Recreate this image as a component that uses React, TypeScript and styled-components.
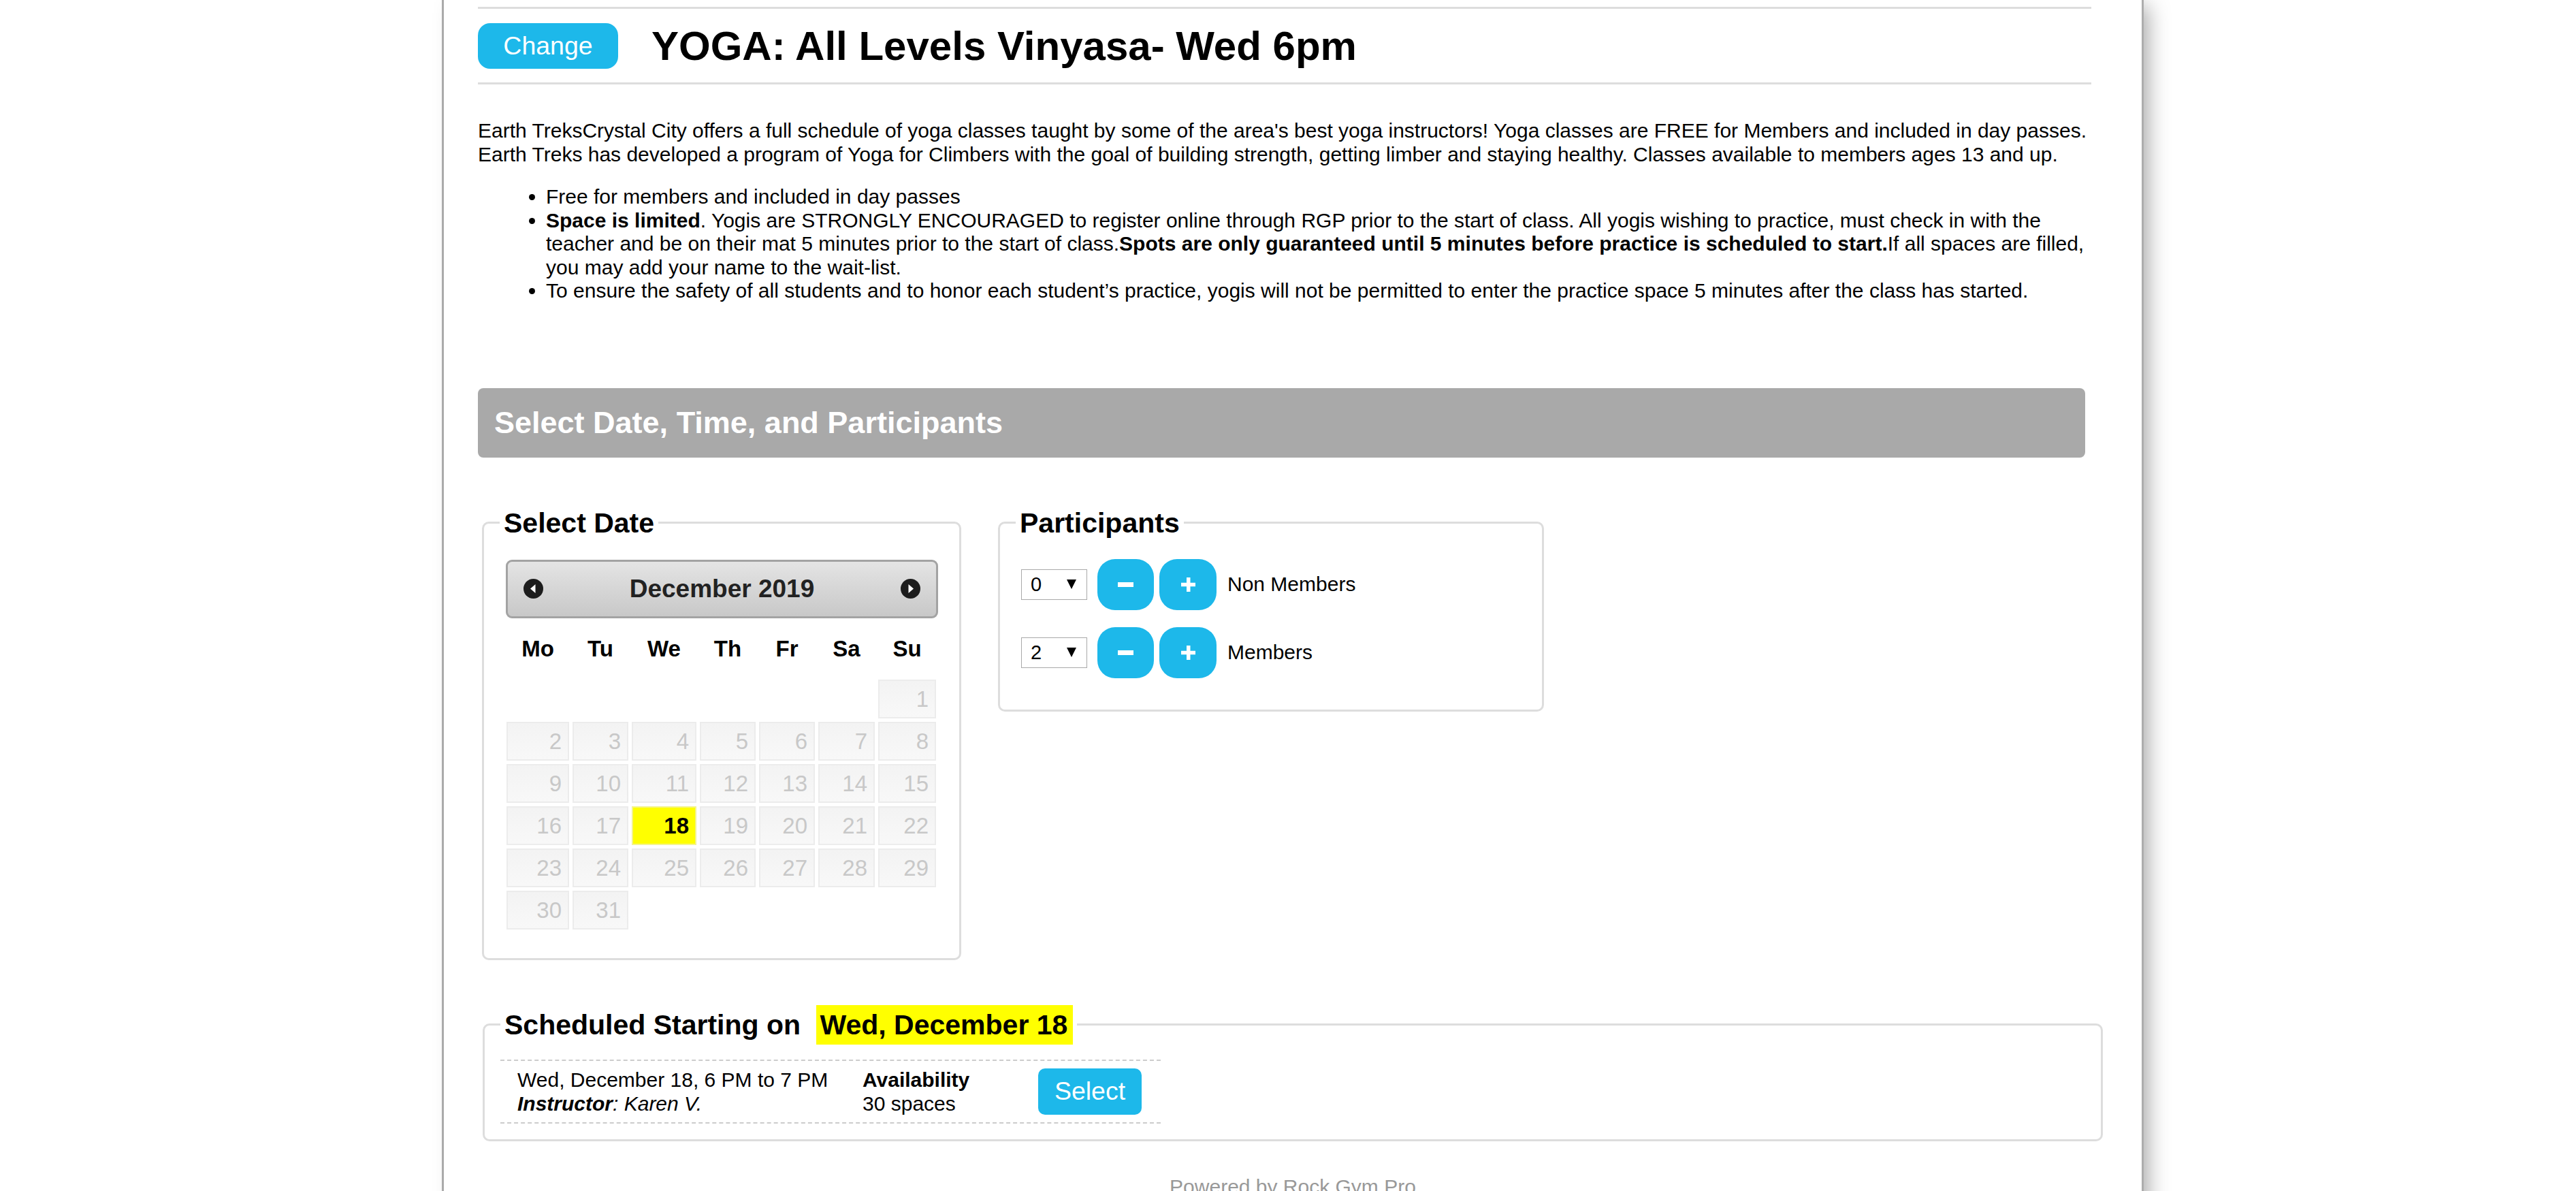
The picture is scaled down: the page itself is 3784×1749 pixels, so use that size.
import React from 'react';
import styled, { createGlobalStyle } from 'styled-components';

const GlobalStyle = createGlobalStyle`
  html, body { margin: 0; padding: 0; background: #fff; }
  body {
    font-family: "Liberation Sans", Arial, Helvetica, sans-serif;
    color: #000;
    font-size: 30px;
  }
  * { box-sizing: border-box; }
`;

const Page = styled.div`
  padding-left: 14px;
  height: 1749px;
  overflow: hidden;
`;

const Container = styled.div`
  width: 2500px;
  margin: 0 auto;
  min-height: 1800px;
  background: #fff;
  border-left: 3px solid #aaa;
  border-right: 3px solid #adadad;
  box-shadow: 14px 0 30px -8px rgba(0, 0, 0, 0.35);
  padding: 10px 57px 0 50px;
`;

const Rule = styled.div`
  height: 3px;
  background: #ddd;
  margin-right: 17px;
`;

const HeadingRow = styled.div`
  display: flex;
  align-items: center;
  gap: 49px;
  padding: 21px 0 20px;
`;

const PillButton = styled.button<{ $w: number; $h: number; $r: number }>`
  width: ${(p) => p.$w}px;
  height: ${(p) => p.$h}px;
  border-radius: ${(p) => p.$r}px;
  border: none;
  background: #1db8ea;
  color: #fff;
  font-family: "Liberation Sans", Arial, sans-serif;
  font-size: 37.5px;
  padding: 0;
  display: flex;
  align-items: center;
  justify-content: center;
  flex-shrink: 0;
`;

const Title = styled.h1`
  margin: 0;
  font-size: 60px;
  font-weight: bold;
  line-height: 1;
`;

const Description = styled.p`
  margin: 51px 17px 0 0;
  line-height: 34.5px;
`;

const Bullets = styled.ul`
  margin: 28px 17px 0 0;
  padding-left: 100px;
  line-height: 34.5px;
`;

const SectionBar = styled.div`
  margin: 125px 26px 0 0;
  height: 102px;
  background: #a9a9a9;
  border-radius: 8px;
  color: #fff;
  font-size: 45px;
  font-weight: bold;
  padding-left: 24px;
  display: flex;
  align-items: center;
`;

const FieldsetRow = styled.div`
  display: flex;
  align-items: flex-start;
  gap: 54px;
  margin: 73px 0 0 6px;
`;

const Fieldset = styled.fieldset<{ $w?: number }>`
  margin: 0;
  border: 3px solid #ddd;
  border-radius: 10px;
  min-width: 0;
  ${(p) => (p.$w ? `width: ${p.$w}px;` : '')}
`;

const DateFieldset = styled(Fieldset)`
  padding: 22px 22px 33px 23px;
`;

const ParticipantsFieldset = styled(Fieldset)`
  padding: 30px 23px 46px 23px;
`;

const ScheduleFieldset = styled(Fieldset)`
  margin: 72px 0 0 7px;
  padding: 28px 23px 23px 23px;
`;

const Legend = styled.legend`
  font-size: 41px;
  font-weight: bold;
  line-height: 46px;
  padding: 0 6px;
`;

const Highlight = styled.span`
  background: #ffff00;
  margin-left: 12px;
  padding: 6px 8px 6px 5px;
`;

/* Calendar */
const Calendar = styled.div`
  width: 653px;
  padding: 9px;
`;

const CalHeader = styled.div`
  height: 86px;
  border: 3px solid #a3a3a3;
  border-radius: 9px;
  background: linear-gradient(#e4e4e4, #c8c8c8);
  display: flex;
  align-items: center;
  justify-content: space-between;
  padding: 0 22px;
`;

const CalTitle = styled.div`
  font-size: 37px;
  font-weight: bold;
  color: #222;
`;

const COLS = '92px 82px 95px 82px 82px 83px 85px';

const WeekRow = styled.div`
  display: grid;
  grid-template-columns: ${COLS};
  column-gap: 5px;
  margin: 15px 0 0 1px;
  height: 60px;
  align-items: center;
`;

const WeekDay = styled.div`
  text-align: center;
  font-size: 33px;
  font-weight: bold;
`;

const DayGrid = styled.div`
  display: grid;
  grid-template-columns: ${COLS};
  grid-auto-rows: 57px;
  column-gap: 5px;
  row-gap: 5px;
  margin: 15px 0 0 1px;
`;

const DayCell = styled.div<{ $active?: boolean; $empty?: boolean }>`
  border: 2px solid ${(p) => (p.$empty ? 'transparent' : p.$active ? '#f4f48c' : '#ececec')};
  background: ${(p) =>
    p.$empty ? 'transparent' : p.$active ? '#ffff00' : 'linear-gradient(#f3f3f3, #f8f8f8)'};
  color: ${(p) => (p.$active ? '#000' : '#c8c8c8')};
  font-weight: ${(p) => (p.$active ? 'bold' : 'normal')};
  font-size: 33px;
  text-align: right;
  padding-right: 9px;
  line-height: 53px;
`;

/* Participants */
const PartRow = styled.div`
  display: flex;
  align-items: center;
  & + & {
    margin-top: 25px;
  }
`;

const SelectBox = styled.div`
  width: 97px;
  height: 45px;
  margin: 0 15px 0 8px;
  border: 1px solid #a9a9a9;
  display: flex;
  align-items: center;
  justify-content: space-between;
  padding: 0 15px 0 13px;
  font-size: 29px;
`;

const Caret = styled.span`
  width: 0;
  height: 0;
  border-left: 7.5px solid transparent;
  border-right: 7.5px solid transparent;
  border-top: 14px solid #000;
`;

const StepGroup = styled.div`
  display: flex;
  gap: 8px;
  margin-right: 16px;
`;

/* Schedule */
const SlotTable = styled.div`
  width: 970px;
  height: 94px;
  border-top: 2px dashed #ccc;
  border-bottom: 2px dashed #ccc;
  display: grid;
  grid-template-columns: 532px 258px 180px;
  align-items: center;
  line-height: 35px;
`;

const SlotCell = styled.div<{ $pl?: number }>`
  padding-left: ${(p) => p.$pl ?? 0}px;
`;

const Footer = styled.div`
  margin: 50px -57px 0 -50px;
  text-align: center;
  color: #999;
  line-height: 34.5px;
`;

const NavIcon = ({ dir }: { dir: 'prev' | 'next' }) => (
  <svg width="31" height="31" viewBox="0 0 31 31">
    <circle cx="15.5" cy="15.5" r="14.5" fill="#1d1d1d" />
    {dir === 'prev' ? (
      <polygon points="18.5,9 11,15.5 18.5,22" fill="#fff" />
    ) : (
      <polygon points="12.5,9 20,15.5 12.5,22" fill="#fff" />
    )}
  </svg>
);

const MinusIcon = () => (
  <svg width="23" height="7" viewBox="0 0 23 7">
    <rect x="0" y="0" width="23" height="7" fill="#fff" />
  </svg>
);

const PlusIcon = () => (
  <svg width="21" height="21" viewBox="0 0 21 21">
    <rect x="8" y="0" width="5.5" height="21" fill="#fff" />
    <rect x="0" y="7.75" width="21" height="5.5" fill="#fff" />
  </svg>
);

const weekdays = ['Mo', 'Tu', 'We', 'Th', 'Fr', 'Sa', 'Su'];

const Participant = ({ value, label }: { value: number; label: string }) => (
  <PartRow>
    <SelectBox>
      <span>{value}</span>
      <Caret />
    </SelectBox>
    <StepGroup>
      <PillButton $w={83} $h={75} $r={26} aria-label="minus">
        <MinusIcon />
      </PillButton>
      <PillButton $w={84} $h={75} $r={26} aria-label="plus">
        <PlusIcon />
      </PillButton>
    </StepGroup>
    <span>{label}</span>
  </PartRow>
);

export default function App() {
  const cells: { day?: number }[] = [];
  for (let i = 0; i < 6; i++) cells.push({});
  for (let d = 1; d <= 31; d++) cells.push({ day: d });

  return (
    <>
      <GlobalStyle />
      <Page>
        <Container>
          <Rule />
          <HeadingRow>
            <PillButton $w={206} $h={67} $r={18}>Change</PillButton>
            <Title>YOGA: All Levels Vinyasa- Wed 6pm</Title>
          </HeadingRow>
          <Rule />

          <Description>
            Earth TreksCrystal City offers a full schedule of yoga classes taught by some of the area's best yoga
            instructors! Yoga classes are FREE for Members and included in day passes. Earth Treks has developed a
            program of Yoga for Climbers with the goal of building strength, getting limber and staying healthy.
            Classes available to members ages 13 and up.
          </Description>
          <Bullets>
            <li>Free for members and included in day passes</li>
            <li>
              <b>Space is limited</b>. Yogis are STRONGLY ENCOURAGED to register online through RGP prior to the start
              of class. All yogis wishing to practice, must check in with the teacher and be on their mat 5 minutes
              prior to the start of class.<b>Spots are only guaranteed until 5 minutes before practice is scheduled to
              start.</b>If all spaces are filled, you may add your name to the wait-list.
            </li>
            <li>
              To ensure the safety of all students and to honor each student’s practice, yogis will not be permitted
              to enter the practice space 5 minutes after the class has started.
            </li>
          </Bullets>

          <SectionBar>Select Date, Time, and Participants</SectionBar>

          <FieldsetRow>
            <DateFieldset $w={704}>
              <Legend>Select Date</Legend>
              <Calendar>
                <CalHeader>
                  <NavIcon dir="prev" />
                  <CalTitle>December 2019</CalTitle>
                  <NavIcon dir="next" />
                </CalHeader>
                <WeekRow>
                  {weekdays.map((w) => (
                    <WeekDay key={w}>{w}</WeekDay>
                  ))}
                </WeekRow>
                <DayGrid>
                  {cells.map((c, i) => (
                    <DayCell key={i} $empty={!c.day} $active={c.day === 18}>
                      {c.day ?? ''}
                    </DayCell>
                  ))}
                </DayGrid>
              </Calendar>
            </DateFieldset>

            <ParticipantsFieldset $w={802}>
              <Legend>Participants</Legend>
              <Participant value={0} label="Non Members" />
              <Participant value={2} label="Members" />
            </ParticipantsFieldset>
          </FieldsetRow>

          <ScheduleFieldset>
            <Legend>
              Scheduled Starting on <Highlight>Wed, December 18</Highlight>
            </Legend>
            <SlotTable>
              <SlotCell $pl={25}>
                Wed, December 18, 6 PM to 7 PM
                <br />
                <i>
                  <b>Instructor</b>: Karen V.
                </i>
              </SlotCell>
              <SlotCell>
                <b>Availability</b>
                <br />
                30 spaces
              </SlotCell>
              <SlotCell>
                <PillButton $w={152} $h={68} $r={10}>Select</PillButton>
              </SlotCell>
            </SlotTable>
          </ScheduleFieldset>

          <Footer>Powered by Rock Gym Pro</Footer>
        </Container>
      </Page>
    </>
  );
}
